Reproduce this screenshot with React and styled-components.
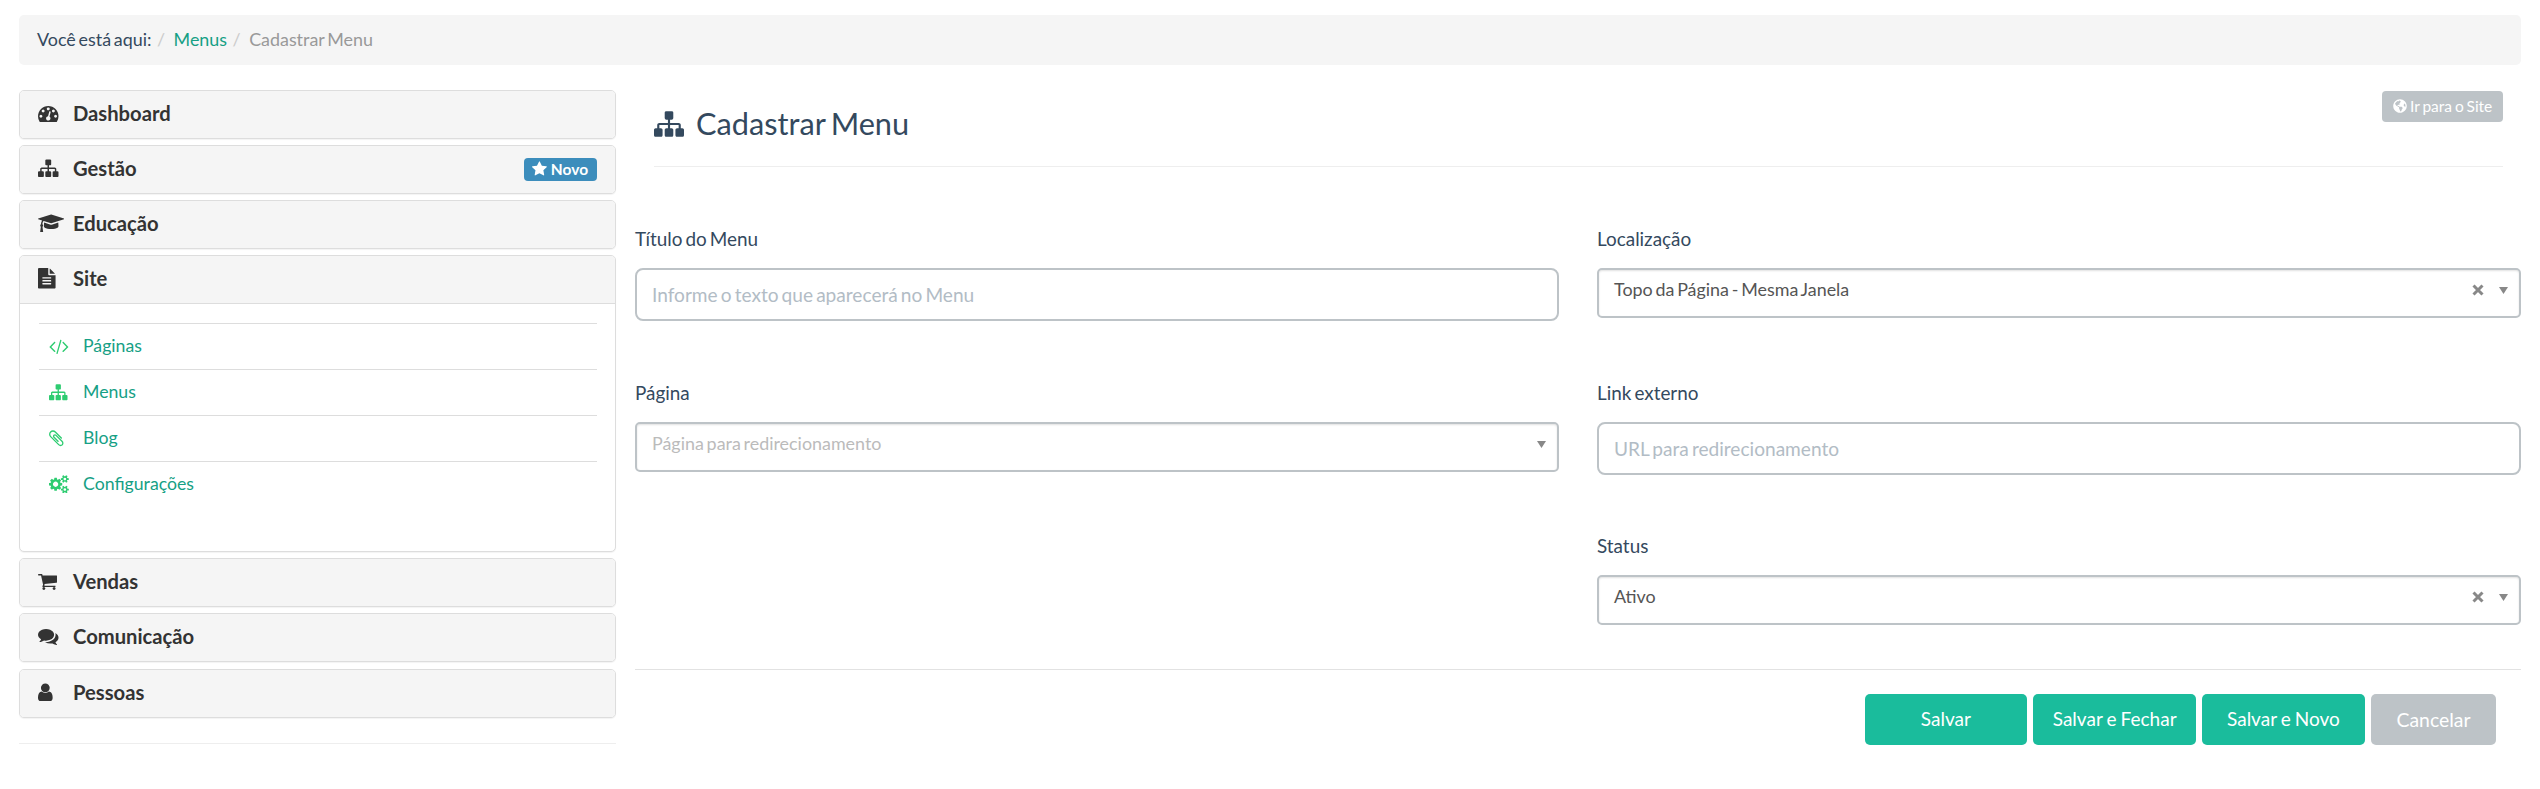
import React from "react";
import styled, { createGlobalStyle } from "styled-components";
import { FaGlobeAmericas } from "react-icons/fa";

const Global = createGlobalStyle`
  *, *::before, *::after { box-sizing: border-box; }
  body { margin: 0; background: #fff; color: #34495e; font-family: Lato, "Liberation Sans", sans-serif; font-size: 17.9px; line-height: 26px; word-spacing: -1.8px; }
`;

const glyphs = {
  sitemap: ["0 0 1792 1792", "M1792 1248v320q0 40-28 68t-68 28h-320q-40 0-68-28t-28-68v-320q0-40 28-68t68-28h96v-192h-512v192h96q40 0 68 28t28 68v320q0 40-28 68t-68 28h-320q-40 0-68-28t-28-68v-320q0-40 28-68t68-28h96v-192h-512v192h96q40 0 68 28t28 68v320q0 40-28 68t-68 28h-320q-40 0-68-28t-28-68v-320q0-40 28-68t68-28h96v-192q0-52 38-90t90-38h512v-192h-96q-40 0-68-28t-28-68v-320q0-40 28-68t68-28h320q40 0 68 28t28 68v320q0 40-28 68t-68 28h-96v192h512q52 0 90 38t38 90v192h96q40 0 68 28t28 68z"],
  gauge: ["0 0 1792 1792", "M384 1152q0-53-37.5-90.5t-90.5-37.5-90.5 37.5-37.5 90.5 37.5 90.5 90.5 37.5 90.5-37.5 37.5-90.5zm192-448q0-53-37.5-90.5t-90.5-37.5-90.5 37.5-37.5 90.5 37.5 90.5 90.5 37.5 90.5-37.5 37.5-90.5zm428 481l101-382q6-26-7.5-48.5t-38.5-29.5-48 6.5-30 39.5l-101 382q-60 5-107 43.5t-63 98.5q-20 77 20 146t117 89 146-20 89-117q16-60-6-117t-72-91zm660-33q0-53-37.5-90.5t-90.5-37.5-90.5 37.5-37.5 90.5 37.5 90.5 90.5 37.5 90.5-37.5 37.5-90.5zm-640-640q0-53-37.5-90.5t-90.5-37.5-90.5 37.5-37.5 90.5 37.5 90.5 90.5 37.5 90.5-37.5 37.5-90.5zm448 192q0-53-37.5-90.5t-90.5-37.5-90.5 37.5-37.5 90.5 37.5 90.5 90.5 37.5 90.5-37.5 37.5-90.5zm320 448q0 261-141 483-19 29-54 29h-1402q-35 0-54-29-141-221-141-483 0-182 71-348t191-286 286-191 348-71 348 71 286 191 191 286 71 348z"],
  cap: ["0 0 2304 1792", "M1774 836l18 316q4 69-82 128t-235 93.5-323 34.5-323-34.5-235-93.5-82-128l18-316 574 181q22 7 48 7t48-7zm530-324q0 23-22 31l-1120 352q-4 1-10 1t-10-1l-652-206q-43 34-71 111.5t-34 178.5q63 36 63 109 0 69-58 107l58 433q2 14-8 25-9 11-24 11h-192q-15 0-24-11-10-11-8-25l58-433q-58-38-58-107 0-73 65-111 11-207 98-330l-333-104q-22-8-22-31t22-31l1120-352q4-1 10-1t10 1l1120 352q22 8 22 31z"],
  file: ["128 0 1536 1792", "M1152 512v-472q22 14 36 28l408 408q14 14 28 36h-472zm-128 32q0 40 28 68t68 28h544v1056q0 40-28 68t-68 28h-1344q-40 0-68-28t-28-68v-1600q0-40 28-68t68-28h800v544zm256 864v-64q0-14-9-23t-23-9h-704q-14 0-23 9t-9 23v64q0 14 9 23t23 9h704q14 0 23-9t9-23zm0-256v-64q0-14-9-23t-23-9h-704q-14 0-23 9t-9 23v64q0 14 9 23t23 9h704q14 0 23-9t9-23zm0-256v-64q0-14-9-23t-23-9h-704q-14 0-23 9t-9 23v64q0 14 9 23t23 9h704q14 0 23-9t9-23z"],
  code: ["64 0 1920 1792", "M681 1399l-50 50q-10 10-23 10t-23-10l-466-466q-10-10-10-23t10-23l466-466q10-10 23-10t23 10l50 50q10 10 10 23t-10 23l-393 393 393 393q10 10 10 23t-10 23zm591-1067l-373 1291q-4 13-15.5 19.5t-23.5 2.5l-62-17q-13-4-19.5-15.5t-2.5-24.5l373-1291q4-13 15.5-19.5t23.5-2.5l62 17q13 4 19.5 15.5t2.5 24.5zm657 651l-466 466q-10 10-23 10t-23-10l-50-50q-10-10-10-23t10-23l393-393-393-393q-10-10-10-23t10-23l50-50q10-10 23-10t23 10l466 466q10 10 10 23t-10 23z"],
  clip: ["192 0 1408 1792", "M1596 1385q0 117-79 196t-196 79q-135 0-235-100l-777-776q-113-115-113-271 0-159 110-270t269-111q158 0 273 113l605 606q10 10 10 22 0 16-30.5 46.5t-46.5 30.5q-13 0-23-10l-606-607q-79-77-181-77-106 0-179 75t-73 181q0 105 76 181l776 777q63 63 145 63 64 0 106-42t42-106q0-82-63-145l-581-581q-26-24-60-24-29 0-48 19t-19 48q0 32 25 59l410 410q10 10 10 22 0 16-31 47t-47 31q-12 0-22-10l-410-410q-63-61-63-149 0-82 57-139t139-57q88 0 149 63l581 581q100 98 100 235z"],
  cogs: ["0 0 1920 1792", "M896 896q0-106-75-181t-181-75-181 75-75 181 75 181 181 75 181-75 75-181zm768 512q0-52-38-90t-90-38-90 38-38 90q0 53 37.5 90.5t90.5 37.5 90.5-37.5 37.5-90.5zm0-1024q0-52-38-90t-90-38-90 38-38 90q0 53 37.5 90.5t90.5 37.5 90.5-37.5 37.5-90.5zm-384 421v185q0 10-7 19.5t-16 10.5l-155 24q-11 35-32 76 34 48 90 115 7 11 7 20 0 12-7 19-23 30-82.5 89.5t-78.5 59.5q-11 0-21-7l-115-90q-37 19-77 31-11 108-23 155-7 24-30 24h-186q-11 0-20-7.5t-10-17.5l-23-153q-34-10-75-31l-118 89q-7 7-20 7-11 0-21-8-144-133-144-160 0-9 7-19 10-14 41-53t47-61q-23-44-35-82l-152-24q-10-1-17-9.5t-7-19.5v-185q0-10 7-19.5t16-10.5l155-24q11-35 32-76-34-48-90-115-7-11-7-20 0-12 7-20 22-30 82-89t79-59q11 0 21 7l115 90q34-18 77-32 11-108 23-154 7-24 30-24h186q11 0 20 7.5t10 17.5l23 153q34 10 75 31l118-89q8-7 20-7 11 0 21 8 144 133 144 160 0 8-7 19-12 16-42 54t-45 60q23 48 34 82l152 23q10 2 17 10.5t7 19.5zm640 533v140q0 16-149 31-12 27-30 52 51 113 51 138 0 4-4 7-122 71-124 71-8 0-46-47t-52-68q-20 2-30 2t-30-2q-14 21-52 68t-46 47q-2 0-124-71-4-3-4-7 0-25 51-138-18-25-30-52-149-15-149-31v-140q0-16 149-31 13-29 30-52-51-113-51-138 0-4 4-7 4-2 35-20t59-34 30-16q8 0 46 46.5t52 67.5q20-2 30-2t30 2q51-71 92-112l6-2q4 0 124 70 4 3 4 7 0 25-51 138 17 23 30 52 149 15 149 31zm0-1024v140q0 16-149 31-12 27-30 52 51 113 51 138 0 4-4 7-122 71-124 71-8 0-46-47t-52-68q-20 2-30 2t-30-2q-14 21-52 68t-46 47q-2 0-124-71-4-3-4-7 0-25 51-138-18-25-30-52-149-15-149-31v-140q0-16 149-31 13-29 30-52-51-113-51-138 0-4 4-7 4-2 35-20t59-34 30-16q8 0 46 46.5t52 67.5q20-2 30-2t30 2q51-71 92-112l6-2q4 0 124 70 4 3 4 7 0 25-51 138 17 23 30 52 149 15 149 31z"],
  cart: ["64 0 1664 1792", "M704 1536q0 52-38 90t-90 38-90-38-38-90 38-90 90-38 90 38 38 90zm896 0q0 52-38 90t-90 38-90-38-38-90 38-90 90-38 90 38 38 90zm128-1088v512q0 24-16.5 42.5t-40.5 21.5l-1044 122q13 60 13 70 0 16-24 64h920q26 0 45 19t19 45-19 45-45 19h-1024q-26 0-45-19t-19-45q0-11 8-31.5t16-36 21.5-40 15.5-29.5l-177-823h-204q-26 0-45-19t-19-45 19-45 45-19h256q16 0 28.5 6.5t19.5 15.5 13 24.5 8 26 5.5 29.5 4.5 26h1201q26 0 45 19t19 45z"],
  comments: ["0 0 1792 1792", "M1408 768q0 139-94 257t-256.5 186.5-353.5 68.5q-86 0-176-16-124 88-278 128-36 9-86 16h-3q-11 0-20.5-8t-11.5-21q-1-3-1-6.5t.5-6.5 2-6l2.5-5 3.5-5.5 4-5 4.5-5 4-4.5q5-6 23-25t26-29.5 22.5-29 25-38.5 20.5-44q-124-72-195-177t-71-224q0-139 94-257t256.5-186.5 353.5-68.5 353.5 68.5 256.5 186.5 94 257zm384 256q0 120-71 224.5t-195 176.5q10 24 20.5 44t25 38.5 22.5 29 26 29.5 23 25q1 1 4 4.5t4.5 5 4 5 3.5 5.5l2.5 5 2 6 .5 6.5-1 6.5q-3 14-13 22t-22 7q-50-7-86-16-154-40-278-128-90 16-176 16-271 0-472-132 58 4 88 4 161 0 309-45t264-129q125-92 192-212t67-254q0-77-23-152 129 71 204 178t75 230z"],
  user: ["256 0 1280 1792", "M1536 1399q0 109-62.5 187t-150.5 78h-854q-88 0-150.5-78t-62.5-187q0-85 8.5-160.5t31.5-152 58.5-131 94-89 134.5-34.5q131 128 313 128t313-128q76 0 134.5 34.5t94 89 58.5 131 31.5 152 8.5 160.5zm-256-887q0 159-112.5 271.5t-271.5 112.5-271.5-112.5-112.5-271.5 112.5-271.5 271.5-112.5 271.5 112.5 112.5 271.5z"],
  star: ["64 0 1664 1792", "M1728 647q0 22-26 48l-363 354 86 500q1 7 1 20 0 21-10.5 35.5t-30.5 14.5q-19 0-40-12l-449-236-449 236q-22 12-40 12-21 0-31.5-14.5t-10.5-35.5q0-6 2-20l86-500-364-354q-25-27-25-48 0-37 56-46l502-73 225-455q19-41 49-41t49 41l225 455 502 73q56 9 56 46z"],
};

const Svg = styled.svg`
  display: block;
  height: ${(p) => p.$size}px;
  width: auto;
  fill: currentColor;
  flex: none;
`;
const Glyph = ({ name, size }) => (
  <Svg $size={size} viewBox={glyphs[name][0]} aria-hidden="true"><path d={glyphs[name][1]} /></Svg>
);

const Page = styled.div`padding: 15px 19px 0 19px;`;
const Breadcrumb = styled.nav`
  display: flex;
  align-items: center;
  height: 50px;
  padding: 0 18px 2px;
  border-radius: 5px;
  background: #f5f5f5;
  white-space: pre;
`;
const Slash = styled.span`color: #ccc; padding: 0 8.5px 0 5.5px;`;
const Crumb = styled.a`color: ${(p) => (p.$active ? "#999" : "#16a085")};`;
const Columns = styled.div`display: flex; gap: 19px; margin-top: 25px;`;

const Sidebar = styled.aside`width: 597px; flex: none; border-bottom: 1px solid #eee; height: 654px;`;
const Panel = styled.section`
  border: 1px solid #ddd;
  border-radius: 5px;
  background: #fff;
  box-shadow: 0 1px 1px rgba(0, 0, 0, 0.05);
  overflow: hidden;
`;
const Panels = styled.div`
  display: flex;
  flex-direction: column;
  gap: 6px;
  ${Panel}:last-child { margin-top: 1px; }
`;
const PanelHead = styled.header`
  display: flex;
  align-items: center;
  height: 47px;
  padding: 0 18px 3px;
  background: #f5f5f5;
  color: #333;
  font-size: 20.2px;
  font-weight: 700;
`;
const IconSlot = styled.span`width: ${(p) => p.$width}px; padding-top: ${(p) => p.$drop || 0}px; flex: none;`;
const Badge = styled.span`
  display: flex;
  align-items: center;
  gap: 4px;
  width: 73px;
  height: 23px;
  margin: 3px 0 0 auto;
  padding: 0 0 1px 8px;
  border-radius: 4px;
  background: #3c8dbc;
  color: #fff;
  font-size: 15.5px;
`;
const PanelBody = styled.ul`
  list-style: none;
  margin: 0;
  height: 248px;
  padding: 19px 18px 0 19px;
  border-top: 1px solid #ddd;
`;
const SubItem = styled.li`
  display: flex;
  align-items: center;
  height: 46px;
  padding: 0 0 1.5px 10px;
  border-top: 1px solid #ddd;
  color: #2ecc71;
  font-size: 17.7px;
`;
const SubLink = styled.a`color: #16a085;`;

const Main = styled.main`flex: 1; min-width: 0;`;
const TitleBar = styled.header`
  display: flex;
  justify-content: space-between;
  align-items: flex-start;
  height: 77px;
  margin: 0 18px 0 19px;
  border-bottom: 1px solid #eee;
`;
const Title = styled.h1`
  display: flex;
  align-items: center;
  gap: 12px;
  margin: 16px 0 0;
  font-size: 30.7px;
  line-height: 36px;
  font-weight: 400;
  word-spacing: -2.4px;
`;
const SiteButton = styled.button`
  display: flex;
  align-items: center;
  gap: 3px;
  width: 121px;
  height: 31px;
  margin-top: 1px;
  padding: 0 0 1px 11px;
  border: 0;
  border-radius: 4px;
  background: #bdc3c7;
  color: #fff;
  font: 15.5px Lato, sans-serif;
  word-spacing: -1.1px;
  white-space: nowrap;
`;
const GlobeIcon = styled(FaGlobeAmericas)`
  width: 14px;
  height: 14px;
  margin-bottom: 1px;
`;
const Form = styled.form`
  display: grid;
  grid-template-columns: 1fr 1fr;
  grid-template-rows: 154px 153px 142px;
  column-gap: 38px;
  padding-top: 58px;
  height: 502px;
`;
const Field = styled.div`grid-column: ${(p) => p.$column};`;
const Label = styled.label`display: block; height: 43px; padding-top: 1px; font-size: 18.9px;`;
const Input = styled.input`
  display: block;
  width: 100%;
  height: 53px;
  padding: 0 15px 1px;
  border: 2px solid #bdc3c7;
  border-radius: 8px;
  background: #fff;
  font: 19.1px Lato, sans-serif;
  word-spacing: -1.8px;
  &::placeholder { color: #b2bcc5; opacity: 1; }
`;
const Select = styled.div`
  display: flex;
  align-items: center;
  height: 50px;
  padding: 0 11px 8px 15px;
  border: 2px solid #bdc3c7;
  border-radius: 5px;
  box-shadow: inset 0 1px 2px rgba(0, 0, 0, 0.12);
  color: ${(p) => (p.$empty ? "#bbb" : "#555")};
`;
const Controls = styled.span`display: flex; align-items: center; gap: 15px; margin-left: auto; padding-top: 2px; color: #888;`;
const Actions = styled.footer`
  display: flex;
  justify-content: flex-end;
  gap: 6.3px;
  padding: 24px 25px 0 0;
  border-top: 1px solid #e2e2e2;
`;
const Button = styled.button`
  width: ${(p) => (p.$muted ? 125 : 162.5)}px;
  height: 51px;
  padding: ${(p) => (p.$muted ? "0" : "0 0 2px")};
  border: 0;
  border-radius: 5px;
  background: ${(p) => (p.$muted ? "#bdc3c7" : "#1abc9c")};
  color: #fff;
  font: ${(p) => (p.$muted ? 19.4 : 19)}px Lato, sans-serif;
  word-spacing: -0.8px;
`;

const ClearMark = () => (
  <svg width="12" height="12" viewBox="0 0 12 12"><path d="M1.5 1.5l9 9M10.5 1.5l-9 9" stroke="currentColor" strokeWidth="3" /></svg>
);
const Caret = () => (
  <svg width="9" height="7" viewBox="0 0 9 7"><path d="M0 0h9L4.5 7z" fill="currentColor" /></svg>
);

const MenuPanel = ({ icon, label, badge, children }) => (
  <Panel>
    <PanelHead>
      <IconSlot $width={35} $drop={1}><Glyph name={icon} size={20.5} /></IconSlot>
      {label}
      {badge && <Badge><Glyph name="star" size={16} />{badge}</Badge>}
    </PanelHead>
    {children}
  </Panel>
);
const SelectField = ({ label, column, value, empty }) => (
  <Field $column={column}>
    <Label>{label}</Label>
    <Select $empty={empty}>
      {value}
      <Controls>{!empty && <ClearMark />}<Caret /></Controls>
    </Select>
  </Field>
);
const TextField = ({ label, column, placeholder }) => (
  <Field $column={column}>
    <Label>{label}</Label>
    <Input placeholder={placeholder} />
  </Field>
);

const siteLinks = [["code", "Páginas"], ["sitemap", "Menus"], ["clip", "Blog"], ["cogs", "Configurações"]];

export default function App() {
  return (
    <Page>
      <Global />
      <Breadcrumb>
        <span>Você está aqui:</span><Slash>/</Slash><Crumb>Menus</Crumb><Slash>/</Slash><Crumb $active>Cadastrar Menu</Crumb>
      </Breadcrumb>
      <Columns>
        <Sidebar>
          <Panels>
            <MenuPanel icon="gauge" label="Dashboard" />
            <MenuPanel icon="sitemap" label="Gestão" badge="Novo" />
            <MenuPanel icon="cap" label="Educação" />
            <MenuPanel icon="file" label="Site">
              <PanelBody>
                {siteLinks.map(([icon, label]) => (
                  <SubItem key={label}>
                    <IconSlot $width={34}><Glyph name={icon} size={18.5} /></IconSlot>
                    <SubLink>{label}</SubLink>
                  </SubItem>
                ))}
              </PanelBody>
            </MenuPanel>
            <MenuPanel icon="cart" label="Vendas" />
            <MenuPanel icon="comments" label="Comunicação" />
            <MenuPanel icon="user" label="Pessoas" />
          </Panels>
        </Sidebar>
        <Main>
          <TitleBar>
            <Title><Glyph name="sitemap" size={30} />Cadastrar Menu</Title>
            <SiteButton><GlobeIcon />Ir para o Site</SiteButton>
          </TitleBar>
          <Form>
            <TextField column={1} label="Título do Menu" placeholder="Informe o texto que aparecerá no Menu" />
            <SelectField column={2} label="Localização" value="Topo da Página - Mesma Janela" />
            <SelectField column={1} label="Página" value="Página para redirecionamento" empty />
            <TextField column={2} label="Link externo" placeholder="URL para redirecionamento" />
            <SelectField column={2} label="Status" value="Ativo" />
          </Form>
          <Actions>
            <Button>Salvar</Button>
            <Button>Salvar e Fechar</Button>
            <Button>Salvar e Novo</Button>
            <Button $muted>Cancelar</Button>
          </Actions>
        </Main>
      </Columns>
    </Page>
  );
}
